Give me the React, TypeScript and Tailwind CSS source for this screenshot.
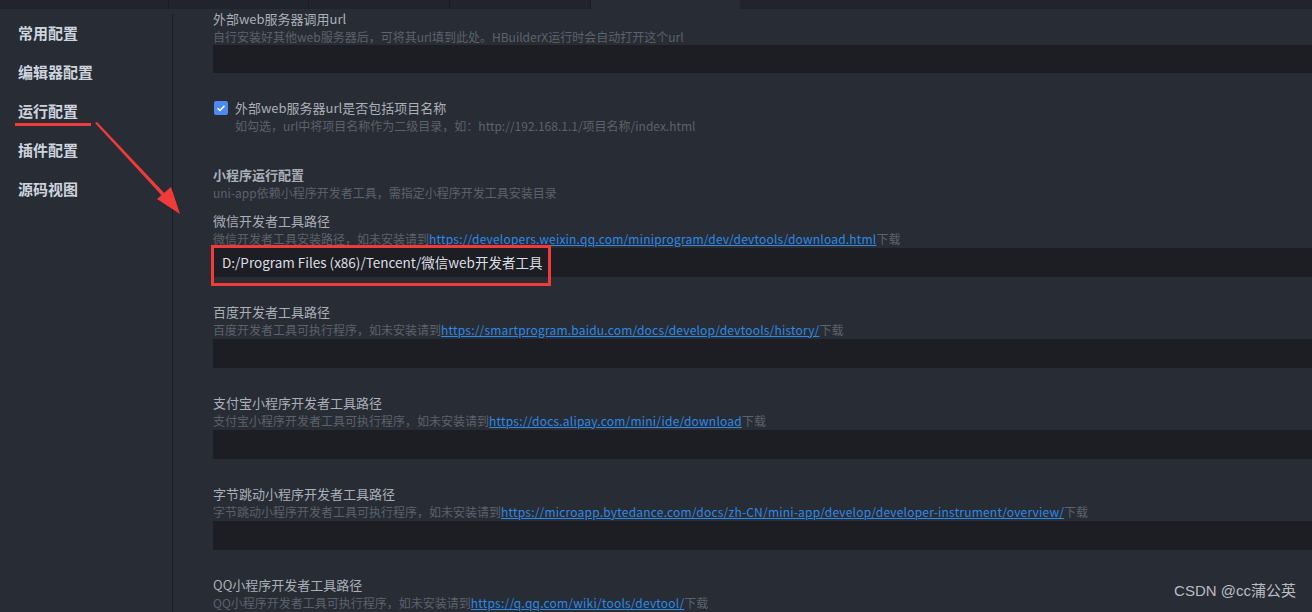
import React from 'react';

const FONT = '"Noto Sans CJK SC", "Noto Sans", sans-serif';

interface PathField {
  title: string;
  desc: string;
  link: string;
  value?: string;
  marked?: boolean;
}

const NAV = ['常用配置', '编辑器配置', '运行配置', '插件配置', '源码视图'];

const PATHS: PathField[] = [
  {
    title: '微信开发者工具路径',
    desc: '微信开发者工具安装路径，如未安装请到',
    link: 'https://developers.weixin.qq.com/miniprogram/dev/devtools/download.html',
    value: 'D:/Program Files (x86)/Tencent/微信web开发者工具',
    marked: true,
  },
  {
    title: '百度开发者工具路径',
    desc: '百度开发者工具可执行程序，如未安装请到',
    link: 'https://smartprogram.baidu.com/docs/develop/devtools/history/',
  },
  {
    title: '支付宝小程序开发者工具路径',
    desc: '支付宝小程序开发者工具可执行程序，如未安装请到',
    link: 'https://docs.alipay.com/mini/ide/download',
  },
  {
    title: '字节跳动小程序开发者工具路径',
    desc: '字节跳动小程序开发者工具可执行程序，如未安装请到',
    link: 'https://microapp.bytedance.com/docs/zh-CN/mini-app/develop/developer-instrument/overview/',
  },
  {
    title: 'QQ小程序开发者工具路径',
    desc: 'QQ小程序开发者工具可执行程序，如未安装请到',
    link: 'https://q.qq.com/wiki/tools/devtool/',
  },
];

const PathBlock: React.FC<{ f: PathField }> = ({ f }) => (
  <div className="mb-[26px] shrink-0">
    <div className="h-[18px] leading-[18px] text-[13px] text-[#aab0b8]">{f.title}</div>
    <div className="h-[18px] leading-[18px] text-[12px] text-[#5c626b] whitespace-nowrap">
      {f.desc}
      <span className="text-[#2d8ae6] underline tracking-[0.2px]">{f.link}</span>
      下载
    </div>
    <div className="relative">
      <div className="h-[29px] bg-[#1d1e23] flex items-center pl-[9px] text-[13.5px] text-[#dcdfe4]">
        {f.value}
      </div>
      {f.marked && (
        <div className="absolute left-[-2px] top-[-3px] w-[340px] h-[41px] border-[3px] border-[#f23a3a]" />
      )}
    </div>
  </div>
);

export default function App() {
  return (
    <div
      className="relative w-[1312px] h-[612px] overflow-hidden bg-[#282c35] flex flex-col"
      style={{ fontFamily: FONT }}
    >
      {/* tab bar */}
      <div className="h-[9px] shrink-0 flex bg-[#21242c]">
        <div className="w-[169px] border-r border-[#1a1c22]" />
        <div className="w-[140px] border-r border-[#1a1c22]" />
        <div className="w-[141px] border-r border-[#1a1c22]" />
        <div className="w-[141px] border-r border-[#1a1c22]" />
        <div className="w-[149px] bg-[#282c35]" />
      </div>

      <div className="flex flex-1 min-h-0">
        {/* sidebar */}
        <div className="w-[173px] shrink-0 mt-[5px] border-r border-[#1b1d22] pt-[8px] pl-[18px]">
          {NAV.map(n => (
            <div key={n} className="h-[39px] leading-[22px] text-[15px] font-bold text-[#cdd4de]">
              {n}
            </div>
          ))}
        </div>

        {/* main */}
        <div className="flex-1 flex flex-col pl-[40px] pt-[1px] overflow-hidden">
          <div className="shrink-0">
            <div className="h-[18px] leading-[18px] text-[13px] text-[#aab0b8]">外部web服务器调用url</div>
            <div className="h-[17px] leading-[17px] text-[12px] text-[#5c626b]">
              自行安装好其他web服务器后，可将其url填到此处。HBuilderX运行时会自动打开这个url
            </div>
            <div className="h-[28px] bg-[#1d1e23]" />
          </div>

          <div className="shrink-0 mt-[26px] flex">
            <div className="w-[14px] h-[14px] mt-[2px] ml-[1px] rounded-[2px] bg-[#4d8af0] flex items-center justify-center">
              <svg width="10" height="10" viewBox="0 0 10 10">
                <path d="M1.5 5.2 L4 7.5 L8.5 2.8" stroke="#fff" strokeWidth="1.5" fill="none" />
              </svg>
            </div>
            <div className="ml-[7px]">
              <div className="h-[18px] leading-[18px] text-[13px] text-[#aab0b8]">外部web服务器url是否包括项目名称</div>
              <div className="h-[18px] leading-[18px] text-[12px] text-[#5c626b]">
                如勾选，url中将项目名称作为二级目录，如：http://192.168.1.1/项目名称/index.html
              </div>
            </div>
          </div>

          <div className="shrink-0 mt-[31px]">
            <div className="h-[18px] leading-[18px] text-[13px] font-bold text-[#aab0b8]">小程序运行配置</div>
            <div className="h-[18px] leading-[18px] text-[12px] text-[#5c626b]">
              uni-app依赖小程序开发者工具，需指定小程序开发工具安装目录
            </div>
          </div>

          <div className="shrink-0 mt-[10px]">
            {PATHS.map(f => (
              <PathBlock key={f.title} f={f} />
            ))}
          </div>
        </div>
      </div>

      {/* annotation: underline and arrow */}
      <div className="absolute left-[15px] top-[123px] w-[76px] h-[3px] bg-[#f23a3a]" />
      <svg className="absolute left-0 top-0" width="200" height="230" viewBox="0 0 200 230">
        <polygon points="95,123 97,122 168,197 165,199" fill="#f23a3a" />
        <polygon points="180,214 157,199 171,187" fill="#f23a3a" />
      </svg>

      {/* watermark */}
      <div
        className="absolute right-[16px] bottom-[10px] text-[15px] text-[#b8bcc2]"
        style={{ fontFamily: '"Liberation Sans", "Noto Sans CJK SC", sans-serif' }}
      >
        CSDN @cc蒲公英
      </div>
    </div>
  );
}
